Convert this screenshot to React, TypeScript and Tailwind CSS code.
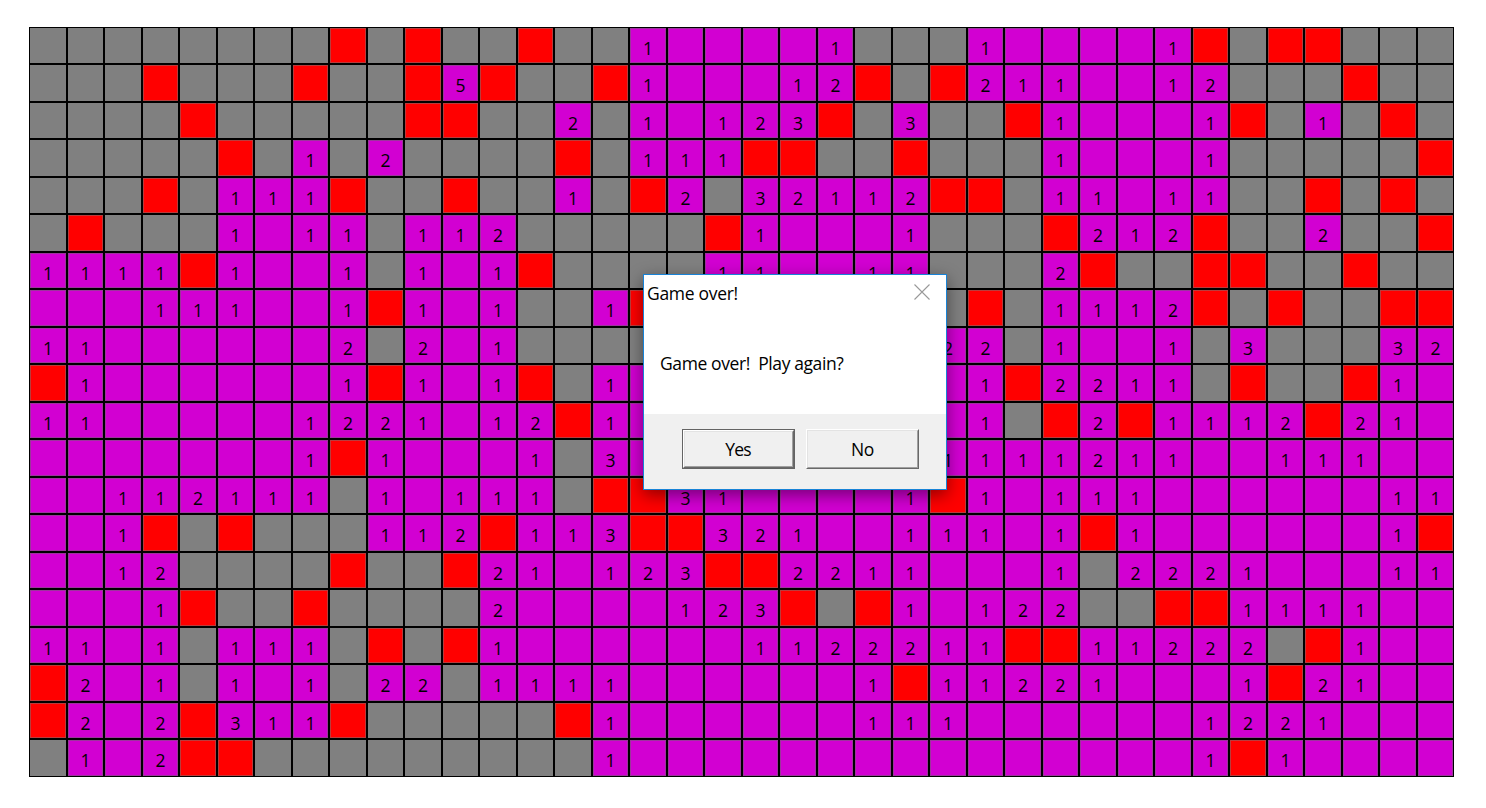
import React from 'react';

// '#' hidden, '*' mine, '.' revealed and empty, digit = adjacent mines
const BOARD: string[] = [
  '########*#*##*##' + '1....1' + '###' + '1....1' + '*#**###',
  '###*###*##*5*##*' + '1...12' + '*#*' + '211..1' + '2###*##',
  '####*#####**##2#' + '1.123*' + '#3#' + '#*1...' + '1*#1#*#',
  '#####*#1#2####*#' + '111**#' + '#*#' + '##1...' + '1#####*',
  '###*#111*##*##1#' + '*2#321' + '12*' + '*#11.1' + '1##*#*#',
  '#*###1.11#112###' + '##*1..' + '.1#' + '##*212' + '*##2##*',
  '1111*1..1#1.1*##' + '##11..' + '11#' + '##2*##' + '**##*##',
  '...111..1*1.1##1' + '*.....' + '..#' + '*#1112' + '*#*##**',
  '11......2#2.1###' + '#.....' + '..2' + '2#1..1' + '#3###32',
  '*1......1*1.1*#1' + '......' + '...' + '1*2211' + '#*##*1.',
  '11.....1221.12*1' + '......' + '...' + '1#*2*1' + '112*21.',
  '.......1*1...1#3' + '......' + '..1' + '111211' + '..111..',
  '..112111#1.111#*' + '*31...' + '.1*' + '1.111.' + '.....11',
  '..1*#*###112*113' + '**321.' + '.11' + '1.1*1.' + '.....1*',
  '..12####*##*21.1' + '23**22' + '11.' + '..1#22' + '21...11',
  '...1*##*####2...' + '.123*#' + '*1.' + '122##*' + '*1111..',
  '11.1#111#*#*1...' + '...112' + '221' + '1**112' + '22#*1..',
  '*2.1#1.1#22#1111' + '......' + '1*1' + '1221..' + '.1*21..',
  '*2.2*311*#####*1' + '......' + '111' + '......' + '1221...',
  '#1.2**#########1' + '......' + '...' + '......' + '1*1....',
];

function Cell({ value }: { value: string }) {
  const tone =
    value === '#'
      ? 'border-[#808080] bg-[#808080]'
      : value === '*'
        ? 'border-[#b93c3c] bg-[#ff0000]'
        : 'border-[#9c349c] bg-[#d200d2]';
  return (
    <div className="border border-black bg-black">
      <div className={`flex h-full w-full items-start justify-center border pt-[10px] text-[17.5px] leading-[18px] text-black ${tone}`}>
        {/[0-9]/.test(value) ? value : null}
      </div>
    </div>
  );
}

function Dialog() {
  return (
    <div
      role="dialog"
      className="absolute top-[274px] left-[643px] flex h-[216px] w-[304px] flex-col border border-[#1883d7] bg-white text-[17.5px] leading-6 text-black shadow-[0_5px_16px_rgba(0,0,0,0.45)]"
    >
      <div className="flex h-[38px] items-start justify-between pt-[6px] pr-4 pl-[3px]">
        <span className="whitespace-pre tracking-[-0.3px]">Game over!</span>
        <svg className="mt-[3px]" width="16" height="16" viewBox="0 0 16 16" fill="none" stroke="#999999" strokeWidth="1.1">
          <path d="M0.5 0.5 15.5 15.5M15.5 0.5 0.5 15.5" />
        </svg>
      </div>
      <p className="flex-1 pt-[38px] pl-4 whitespace-pre tracking-[-0.4px]">{'Game over!  Play again?'}</p>
      <div className="flex h-[75px] gap-[11px] bg-[#f0f0f0] pt-[15px] pl-[38px]">
        <button className="h-10 w-[113px] border border-[#646464] bg-[#f0f0f0] tracking-[-0.8px]">
          <span className="flex h-full w-full items-center justify-center border border-t-white border-r-[#696969] border-b-[#696969] border-l-white">
            <span className="flex h-full w-full items-center justify-center border border-t-[#e3e3e3] border-r-[#a0a0a0] border-b-[#a0a0a0] border-l-[#e3e3e3] pr-px">
              Yes
            </span>
          </span>
        </button>
        <button className="h-10 w-[113px] border border-t-white border-r-[#696969] border-b-[#696969] border-l-white bg-[#f0f0f0] tracking-[-0.4px]">
          <span className="flex h-full w-full items-center justify-center border border-t-[#e3e3e3] border-r-[#a0a0a0] border-b-[#a0a0a0] border-l-[#e3e3e3]">
            No
          </span>
        </button>
      </div>
    </div>
  );
}

export default function App() {
  return (
    <main className="relative h-[808px] w-[1486px] overflow-hidden bg-white pt-[27px] pl-[29px] font-['Open_Sans','Noto_Sans',sans-serif]">
      <div className="grid w-[1425px] grid-cols-[repeat(19,38px_37px)] grid-rows-[repeat(10,37px_38px)]">
        {BOARD.flatMap((row, y) => row.split('').map((value, x) => <Cell key={`${y}-${x}`} value={value} />))}
      </div>
      <Dialog />
    </main>
  );
}
